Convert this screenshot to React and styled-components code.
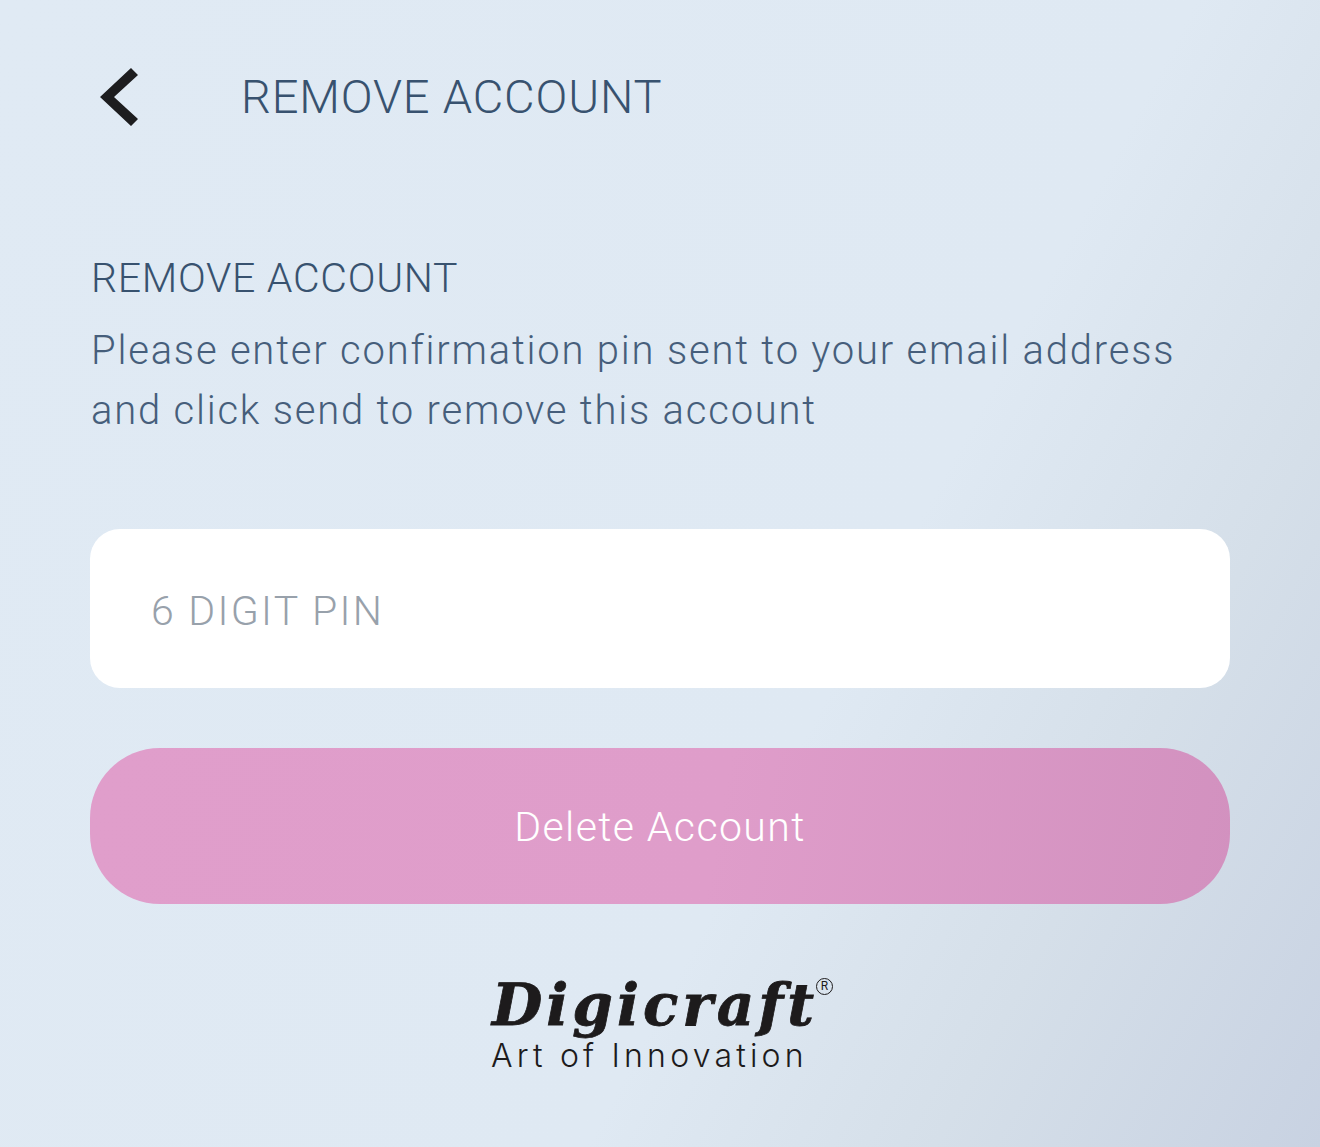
import React from 'react';
import styled, { createGlobalStyle } from 'styled-components';

const Global = createGlobalStyle`
  html, body { margin: 0; padding: 0; }
  body { font-family: "Roboto", "Noto Sans", sans-serif; }
`;

const Page = styled.main`
  box-sizing: border-box;
  width: 1320px;
  height: 1147px;
  padding: 68px 90px 0;
  overflow: hidden;
  display: flex;
  flex-direction: column;
  background: linear-gradient(118deg, #e0eaf4 0%, #dfe9f3 62%, #d5dfe9 80%, #c8d2e2 100%);
`;

const Header = styled.header`
  display: flex;
  align-items: center;
  height: 58px;
  gap: 103px;
  padding-left: 10px;
`;

const BackButton = styled.button`
  width: 38px;
  height: 58px;
  padding: 0;
  border: 0;
  background: none;
  display: block;
`;

const Title = styled.h1`
  margin: 0;
  font-size: 47px;
  font-weight: 300;
  line-height: 58px;
  letter-spacing: 0.85px;
  color: #38526f;
  white-space: nowrap;
`;

const Section = styled.section`
  margin-top: 122px;
  padding-left: 1px;
`;

const SectionTitle = styled.h2`
  margin: 0 0 13px;
  font-size: 41px;
  font-weight: 300;
  line-height: 60px;
  letter-spacing: 0.72px;
  color: #38526f;
  white-space: nowrap;
`;

const Body = styled.p`
  margin: 0;
  font-size: 40px;
  font-weight: 300;
  line-height: 60px;
  letter-spacing: 1.78px;
  color: #465e7b;
  white-space: nowrap;
`;

const PinField = styled.input`
  box-sizing: border-box;
  display: block;
  width: 1140px;
  height: 159px;
  margin-top: 88px;
  padding: 4px 61px 0;
  border: 0;
  border-radius: 30px;
  background: #fff;
  font-family: inherit;
  font-size: 41px;
  font-weight: 300;
  letter-spacing: 2.3px;
  outline: none;
  &::placeholder { color: #98a1ab; opacity: 1; }
`;

const DeleteButton = styled.button`
  display: block;
  width: 1140px;
  height: 156px;
  margin-top: 60px;
  padding: 2px 0 0;
  border: 0;
  border-radius: 70px;
  background: linear-gradient(100deg, #e09ecb 0%, #df9dca 55%, #d291bf 100%);
  color: #fff;
  font-family: inherit;
  font-size: 41px;
  font-weight: 300;
  letter-spacing: 1.4px;
`;

const Logo = styled.div`
  align-self: center;
  position: relative;
  margin-top: 68px;
  margin-left: 2px;
  width: 344px;
  color: #1d1b1c;
`;

const Wordmark = styled.div`
  font-family: "DejaVu Serif", serif;
  font-style: italic;
  font-weight: 700;
  font-size: 58px;
  line-height: 66px;
  letter-spacing: 4px;
  height: 66px;
  padding-left: 3px;
  white-space: nowrap;
  -webkit-text-stroke: 0.8px #1d1b1c;
`;

const Registered = styled.span`
  position: absolute;
  top: 6px;
  right: 0;
  width: 15px;
  height: 15px;
  border: 1.2px solid #1d1b1c;
  border-radius: 50%;
  font-size: 12px;
  line-height: 15px;
  text-align: center;
`;

const Tagline = styled.div`
  font-family: "Inter", sans-serif;
  font-weight: 300;
  font-size: 32px;
  line-height: 36px;
  letter-spacing: 4.2px;
  padding-left: 2px;
  white-space: nowrap;
`;

export default function App() {
  return (
    <Page>
      <Global />
      <Header>
        <BackButton aria-label="Back">
          <svg width="38" height="58" viewBox="0 0 38 58" fill="#1d1d1f">
            <polygon points="0,29 31,0 38,7 14,29 38,51 31,58" />
          </svg>
        </BackButton>
        <Title>REMOVE ACCOUNT</Title>
      </Header>
      <Section>
        <SectionTitle>REMOVE ACCOUNT</SectionTitle>
        <Body>Please enter confirmation pin sent to your email address</Body>
        <Body>and click send to remove this account</Body>
      </Section>
      <PinField placeholder="6 DIGIT PIN" />
      <DeleteButton>Delete Account</DeleteButton>
      <Logo>
        <Wordmark>Digicraft</Wordmark>
        <Registered>R</Registered>
        <Tagline>Art of Innovation</Tagline>
      </Logo>
    </Page>
  );
}
